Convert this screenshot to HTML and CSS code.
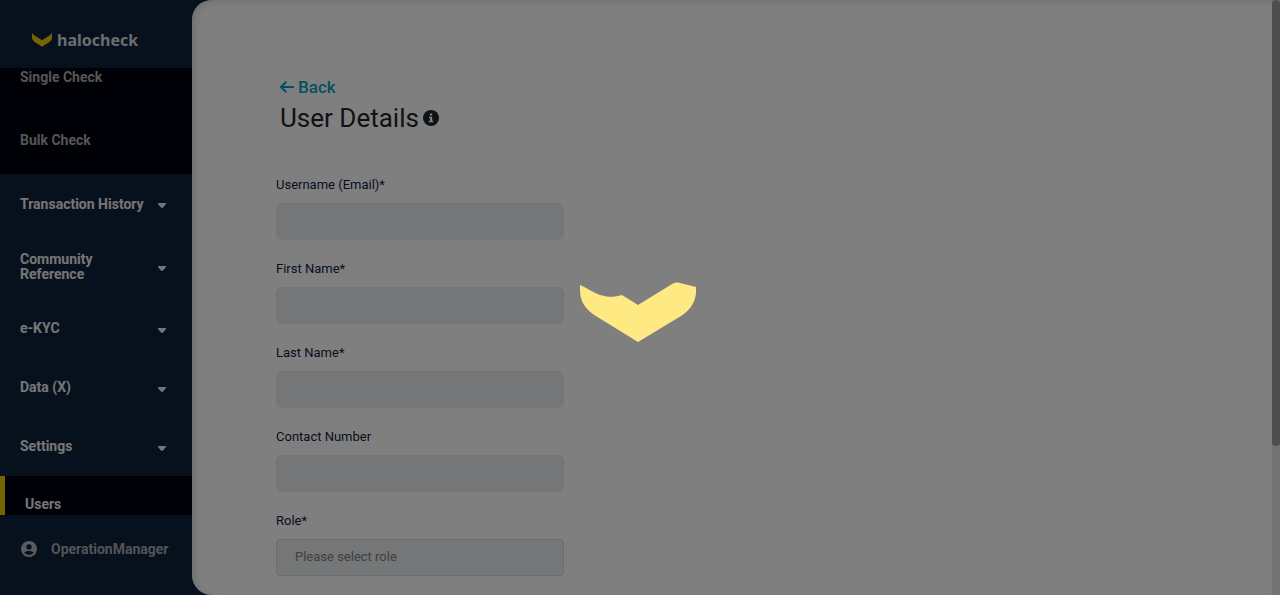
FILE: index.html
```html
<!DOCTYPE html>
<html lang="en">
<head>
<meta charset="utf-8">
<title>halocheck - User Details</title>
<link rel="stylesheet" href="styles.css">
</head>
<body>
<div class="app">
  <aside class="sidebar">
    <a class="brand" href="#">
      <svg class="brand-mark" viewBox="0 0 20 14" aria-hidden="true"><path d="M0 0Q1 1.500 3 2.700L10 7.200 17 2.700Q19 1.500 20 0V4Q20 7.500 17 9.300L10 13.700 3 9.300Q0 7.500 0 4Z"/></svg>
      <span>halocheck</span>
    </a>
    <nav class="menu">
      <div class="submenu">
        <a class="sub-link first" href="#">Single Check</a>
        <a class="sub-link" href="#">Bulk Check</a>
      </div>
      <button class="menu-item tall"><span>Transaction History</span><svg class="caret" viewBox="0 0 8 5"><path d="M0 0H8V1L5 4.500Q4 5.300 3 4.500L0 1Z"/></svg></button>
      <button class="menu-item taller"><span>Community<br>Reference</span><svg class="caret" viewBox="0 0 8 5"><path d="M0 0H8V1L5 4.500Q4 5.300 3 4.500L0 1Z"/></svg></button>
      <button class="menu-item"><span>e-KYC</span><svg class="caret" viewBox="0 0 8 5"><path d="M0 0H8V1L5 4.500Q4 5.300 3 4.500L0 1Z"/></svg></button>
      <button class="menu-item"><span>Data (X)</span><svg class="caret" viewBox="0 0 8 5"><path d="M0 0H8V1L5 4.500Q4 5.300 3 4.500L0 1Z"/></svg></button>
      <button class="menu-item"><span>Settings</span><svg class="caret" viewBox="0 0 8 5"><path d="M0 0H8V1L5 4.500Q4 5.300 3 4.500L0 1Z"/></svg></button>
      <a class="active-link" href="#">Users</a>
    </nav>
    <div class="account">
      <svg class="avatar" viewBox="0 0 16 16" aria-hidden="true"><path fill-rule="evenodd" d="M8 0a8 8 0 1 0 0 16A8 8 0 0 0 8 0Zm0 3.300a2.700 2.700 0 1 1 0 5.400 2.700 2.700 0 0 1 0-5.400ZM8 14a6 6 0 0 1-4.800-2.500C3.800 10.600 6 10 8 10s4.200.6 4.800 1.500A6 6 0 0 1 8 14Z"/></svg>
      <span>OperationManager</span>
    </div>
  </aside>
  <main class="content">
    <header class="page-head">
      <a class="back" href="#"><svg class="arrow" viewBox="0 0 14 12" aria-hidden="true"><path d="M6.300.8 1 6l5.300 5.200M1 6H14"/></svg>Back</a>
      <h1 class="title">User Details<svg class="info" viewBox="0 0 16 16" aria-hidden="true"><circle cx="8" cy="8" r="8"/><path class="info-i" d="M7 3.500h2.200v2H7ZM6 6.700h3.200v4H10.300v1.500H5.800v-1.500H7V8.200H6Z"/></svg></h1>
    </header>
    <form class="form">
      <div class="field"><label for="email">Username (Email)*</label><input id="email" type="text" disabled></div>
      <div class="field"><label for="first">First Name*</label><input id="first" type="text" disabled></div>
      <div class="field"><label for="last">Last Name*</label><input id="last" type="text" disabled></div>
      <div class="field"><label for="contact">Contact Number</label><input id="contact" type="text" disabled></div>
      <div class="field"><label for="role">Role*</label><select id="role" disabled><option>Please select role</option></select></div>
    </form>
  </main>
  <div class="scroll-track"><div class="scroll-thumb"></div></div>
</div>
<div class="overlay" role="status" aria-label="Loading">
  <svg class="loader" viewBox="0 0 116 60" aria-hidden="true"><path d="M0 3C7 6 14 11 20 13 29 15.500 34 15 38 14L42 13 58 23 93 1.500Q95.500 0 98 .5L116 5V11C115 21 110 28 101 34L58 60 15 33.500C4 26 0 18 0 8Z"/></svg>
</div>
</body>
</html>
```
FILE: styles.css
```css
* { box-sizing: border-box; }
body {
  margin: 0;
  font-family: Roboto, "Liberation Sans", sans-serif;
  font-size: 13px;
  background: #0f223d;
}
a { color: inherit; text-decoration: none; }
.app { display: flex; height: 100vh; overflow: hidden; }

.sidebar {
  display: flex;
  flex-direction: column;
  width: 15%;
  flex-shrink: 0;
  color: #ececec;
  font-size: 14px;
  font-weight: 700;
}
.brand {
  display: flex;
  align-items: center;
  gap: 5px;
  height: 68px;
  flex-shrink: 0;
  padding: 12px 0 0 32px;
  font-family: "Noto Sans", sans-serif;
  font-size: 16px;
  color: #d8dadd;
}
.brand-mark { width: 20px; height: 14px; fill: #ecc800; }
.menu { flex: 1; min-height: 0; overflow: hidden; }
.submenu { background: #00020c; height: 106px; color: #aaa; }
.sub-link { display: flex; align-items: center; height: 63px; padding-left: 20px; }
.sub-link.first { height: 40px; padding-bottom: 22px; }
.menu-item {
  display: flex;
  align-items: center;
  justify-content: space-between;
  width: 100%;
  height: 59px;
  padding: 0 26px 0 20px;
  border: 0;
  background: none;
  color: inherit;
  font: inherit;
  line-height: 15px;
  text-align: left;
}
.menu-item.tall { height: 60px; }
.menu-item.taller { height: 65px; }
.caret { width: 8px; height: 5px; margin-top: 3px; fill: #ececec; }
.active-link {
  display: block;
  height: 59px;
  padding: 20px 0 0 20px;
  border-left: 5px solid #ecc800;
  background: #00020c;
}
.account {
  display: flex;
  align-items: center;
  gap: 14px;
  height: 80px;
  flex-shrink: 0;
  padding: 0 0 16px 21px;
  color: #a6a8ae;
  border-top: 3px solid #0c1e3b;
}
.avatar { width: 16px; height: 16px; fill: #b4b6bc; }

.content {
  flex: 1;
  min-width: 0;
  padding: 75px 84px 0;
  background: #fff;
  border-radius: 20px 0 0 20px;
  box-shadow: inset 8px 0 8px -6px #d8d8d8, inset 0 8px 8px -6px #e4e4e4;
}
.page-head { padding-left: 4px; }
.back {
  display: flex;
  align-items: center;
  gap: 4px;
  font-size: 17px;
  line-height: 24px;
  font-weight: 500;
  color: #07a0c8;
}
.arrow { width: 14px; height: 12px; fill: none; stroke: currentColor; stroke-width: 2; }
.title {
  display: flex;
  align-items: center;
  gap: 4px;
  margin: 0;
  font-size: 26px;
  line-height: 38px;
  font-weight: 400;
  color: #212529;
}
.info { width: 16px; height: 16px; fill: #212529; }
.info-i { fill: #fff; }
.form {
  display: flex;
  flex-direction: column;
  gap: 20px;
  max-width: 288px;
  margin-top: 39px;
}
.field { display: flex; flex-direction: column; gap: 9px; }
.field label { line-height: 18px; color: #0f1c3f; }
.field input,
.field select {
  width: 100%;
  height: 37px;
  margin: 0;
  padding: 0 18px;
  border: 1px solid #e6e9ec;
  border-radius: 6px;
  background: #e9ecef;
  font: inherit;
}
.field select {
  height: 37px;
  padding-bottom: 2px;
  appearance: none;
  border: 1px solid #d2d8da;
  border-radius: 4px;
  color: #808080;
  opacity: 1;
}
.scroll-track { width: 8px; flex-shrink: 0; background: #e4e4e4; }
.scroll-thumb { height: 75%; border-radius: 4px; background: #9c9c9c; }

.overlay {
  position: fixed;
  inset: 0;
  display: flex;
  align-items: center;
  justify-content: center;
  background: rgba(0, 0, 0, .5);
}
.loader { width: 116px; height: 60px; margin: 28px 4px 0 0; fill: #ffe983; }
```
